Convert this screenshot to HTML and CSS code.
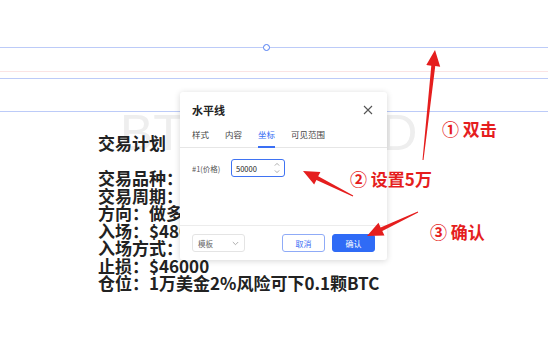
FILE: index.html
```html
<!DOCTYPE html>
<html lang="zh-CN">
<head>
  <meta charset="UTF-8">
  <title>水平线</title>
  <link rel="stylesheet" href="styles.css">
</head>
<body>
  <div class="chart">
    <div class="watermark">BTCUSD, 1D</div>
    <div class="hline blue" style="top: 47px"></div>
    <div class="hline pink" style="top: 71px"></div>
    <div class="hline blue" style="top: 78px"></div>
    <div class="hline blue" style="top: 111px"></div>
    <div class="handle"></div>

    <div class="plan">
      <h2>交易计划</h2>
      <p>交易品种：</p>
      <p>交易周期：</p>
      <p>方向：做多</p>
      <p>入场：$48000</p>
      <p>入场方式：</p>
      <p>止损：$46000</p>
      <p>仓位：1万美金2%风险可下0.1颗BTC</p>
    </div>

    <div class="dialog">
      <div class="dialog-head">
        <span class="dialog-title">水平线</span>
        <svg class="close" width="10" height="10" viewBox="0 0 10 10">
          <path d="M1 1L9 9M9 1L1 9" stroke="#555" stroke-width="1.1" fill="none"/>
        </svg>
      </div>
      <div class="tabs">
        <span class="tab">样式</span>
        <span class="tab">内容</span>
        <span class="tab active">坐标</span>
        <span class="tab">可见范围</span>
      </div>
      <div class="dialog-body">
        <div class="field">
          <span class="field-label">#1(价格)</span>
          <div class="input">
            <span>50000</span>
            <svg class="spin" width="6" height="12" viewBox="0 0 6 12">
              <path d="M0.8 3.6L3 1.4L5.2 3.6M0.8 8.4L3 10.6L5.2 8.4" stroke="#999" stroke-width="0.8" fill="none"/>
            </svg>
          </div>
        </div>
      </div>
      <div class="dialog-foot">
        <div class="select">
          <span>模板</span>
          <svg width="7" height="5" viewBox="0 0 7 5">
            <path d="M0.8 1L3.5 3.7L6.2 1" stroke="#999" stroke-width="0.8" fill="none"/>
          </svg>
        </div>
        <div class="buttons">
          <button class="btn ghost">取消</button>
          <button class="btn primary">确认</button>
        </div>
      </div>
    </div>

    <svg class="arrows" width="548" height="355" viewBox="0 0 548 355">
      <polygon points="423.5,160.05 435.26,66.1 440.2,66.7 435,50 426.3,65.1 431.28,65.7 422.5,159.95"/>
      <polygon points="353.22,195.55 318.19,176.36 320.43,171.89 303,171 314.17,184.41 316.41,179.94 352.78,196.45"/>
      <polygon points="418.21,212.45 382.31,231 384.44,235.52 367,236 378.48,222.86 380.61,227.38 417.79,211.55"/>
    </svg>
    <div class="note" style="left: 442px; top: 116px">① 双击</div>
    <div class="note" style="left: 350px; top: 166px">② 设置5万</div>
    <div class="note" style="left: 430px; top: 219px">③ 确认</div>
  </div>
</body>
</html>
```

FILE: styles.css
```css
body {
  margin: 0;
  background: #fff;
  font-family: "Noto Sans CJK SC", "Noto Sans", sans-serif;
  color: #222;
}
.chart {
  position: relative;
  width: 548px;
  height: 355px;
  overflow: hidden;
}
.hline {
  position: absolute;
  left: 0;
  right: 0;
  height: 1px;
}
.hline.blue {
  background: #bccbf8;
}
.hline.pink {
  background: #fbe4e4;
}
.handle {
  position: absolute;
  left: 263px;
  top: 44px;
  width: 5px;
  height: 5px;
  border: 1px solid #4f7cf2;
  border-radius: 50%;
  background: #fff;
}
.watermark {
  position: absolute;
  left: 120px;
  top: 104px;
  font-family: "Liberation Sans", sans-serif;
  font-size: 50px;
  line-height: normal;
  white-space: nowrap;
  color: #eeeeee;
}
.plan {
  position: relative;
  padding: 132px 0 0 98px;
}
.plan h2 {
  margin: 0 0 15px;
  font-size: 17px;
  line-height: 22px;
  font-weight: bold;
}
.plan p {
  margin: 0;
  font-size: 17px;
  line-height: 17.5px;
  font-weight: bold;
}
.dialog {
  position: absolute;
  left: 180px;
  top: 92px;
  width: 207px;
  background: #fff;
  border-radius: 3px;
  box-shadow: 0 1px 6px rgba(0, 0, 0, 0.16);
}
.dialog-head {
  box-sizing: border-box;
  height: 30px;
  padding: 6px 14px 0 12px;
  display: flex;
  align-items: center;
  justify-content: space-between;
}
.dialog-title {
  font-size: 11px;
  font-weight: bold;
  color: #222;
}
.tabs {
  display: flex;
  gap: 16px;
  height: 25px;
  padding: 0 12px;
  border-bottom: 1px solid #e6e6e6;
}
.tab {
  box-sizing: border-box;
  height: 26px;
  line-height: 24px;
  font-size: 8.5px;
  color: #444;
}
.tab.active {
  color: #3a6ff4;
  border-bottom: 2px solid #3a6ff4;
}
.dialog-body {
  height: 77px;
  box-sizing: border-box;
  padding: 11px 12px 0;
}
.field {
  display: flex;
  align-items: center;
}
.field-label {
  width: 39px;
  font-size: 7.5px;
  color: #555;
}
.input {
  box-sizing: border-box;
  width: 54px;
  height: 18px;
  padding: 0 4px;
  border: 1px solid #3f73f3;
  border-radius: 3px;
  display: flex;
  align-items: center;
  justify-content: space-between;
  font-size: 7.5px;
  color: #222;
}
.dialog-foot {
  border-top: 1px solid #ececec;
  padding: 8px 12px;
  display: flex;
  justify-content: space-between;
}
.select {
  box-sizing: border-box;
  width: 53px;
  height: 18px;
  padding: 0 5px;
  border: 1px solid #e4e4e4;
  border-radius: 3px;
  display: flex;
  align-items: center;
  justify-content: space-between;
  font-size: 7.5px;
  color: #666;
}
.buttons {
  display: flex;
  gap: 7px;
}
.btn {
  box-sizing: border-box;
  width: 43px;
  height: 18px;
  padding: 0;
  border-radius: 3px;
  font-family: inherit;
  font-size: 8px;
}
.btn.ghost {
  background: #fff;
  color: #3a6ff4;
  border: 1px solid #8fabf7;
}
.btn.primary {
  background: #2f6bf6;
  color: #fff;
  border: 1px solid #2f6bf6;
}
.arrows {
  position: absolute;
  left: 0;
  top: 0;
  fill: #e51e1e;
}
.note {
  position: absolute;
  font-size: 17px;
  font-weight: bold;
  color: #e51e1e;
  white-space: nowrap;
}
```
